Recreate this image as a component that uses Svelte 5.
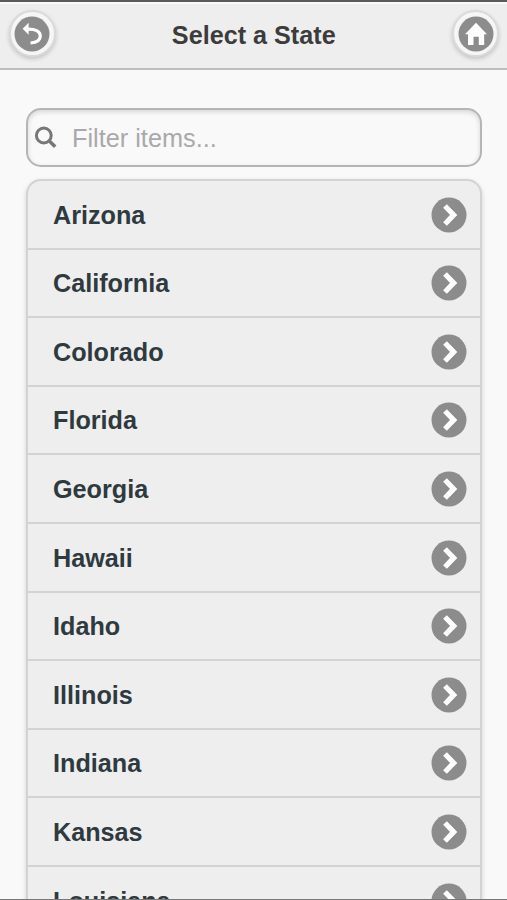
<script>
  const states = ['Arizona', 'California', 'Colorado', 'Florida', 'Georgia', 'Hawaii', 'Idaho', 'Illinois', 'Indiana', 'Kansas', 'Louisiana'];
</script>

<div class="screen">
  <header>
    <button class="round" aria-label="Back">
      <svg width="36" height="36" viewBox="0 0 36 36">
        <circle cx="18" cy="18" r="17.5" fill="#8c8c8c" />
        <path d="M13 13.2C21 12.8 26.3 15 26.3 20C26.3 24.5 22.5 26.6 16.5 27" fill="none" stroke="#fff" stroke-width="3.2" />
        <path d="M8.6 12.8L14.6 6.8V18.8Z" fill="#fff" />
      </svg>
    </button>
    <h1>Select a State</h1>
    <button class="round" aria-label="Home">
      <svg width="36" height="36" viewBox="0 0 36 36">
        <circle cx="18" cy="18" r="17.5" fill="#8c8c8c" />
        <path d="M18 6.7L29 18.2H26.2V29H20.8V20.8H15.5V29H10V18.2H7Z" fill="#fff" />
      </svg>
    </button>
  </header>

  <main>
    <label class="search">
      <svg width="24" height="24" viewBox="0 0 24 24" fill="none" stroke="#777">
        <circle cx="9.8" cy="9.5" r="7.4" stroke-width="3" />
        <path d="M14.8 14.5L21.2 20.7" stroke-width="3.6" />
      </svg>
      <input type="text" placeholder="Filter items..." />
    </label>

    <ul>
      {#each states as state}
        <li>
          <span>{state}</span>
          <svg width="36" height="36" viewBox="0 0 36 36">
            <circle cx="18" cy="18" r="17.5" fill="#8c8c8c" />
            <path d="M14 9L22.7 17.9L14 27" fill="none" stroke="#fff" stroke-width="5.2" />
          </svg>
        </li>
      {/each}
    </ul>
  </main>
</div>

<style>
  .screen {
    box-sizing: border-box;
    height: 900px;
    overflow: hidden;
    display: flex;
    flex-direction: column;
    background: #f9f9f9;
    border-top: 2px solid #5a5a5a;
    border-bottom: 1px solid #777;
    font-family: "Liberation Sans", Arial, sans-serif;
  }
  header {
    box-sizing: border-box;
    height: 68px;
    flex: none;
    display: flex;
    align-items: flex-start;
    justify-content: space-between;
    padding: 8px 8px 0 8.5px;
    background: #eee;
    border-bottom: 2px solid #bdbdbd;
    box-shadow: inset 0 2px 0 #fafafa;
  }
  h1 {
    margin: 0;
    padding-top: 10px;
    font-size: 25.2px;
    line-height: 31px;
    font-weight: 700;
    color: #3c3c3c;
  }
  .round {
    box-sizing: border-box;
    width: 47px;
    height: 47px;
    display: flex;
    align-items: center;
    justify-content: center;
    padding: 0;
    border: 2px solid #dadada;
    border-radius: 50%;
    background: #f6f6f6;
    box-shadow: 0 2px 4px rgba(0, 0, 0, 0.18);
  }
  svg {
    display: block;
    flex: none;
  }
  main {
    padding: 38px 25px 0 26px;
  }
  .search {
    box-sizing: border-box;
    height: 59px;
    display: flex;
    align-items: center;
    padding-left: 6px;
    border: 2px solid #b5b5b5;
    border-radius: 15px;
    box-shadow: inset 0 2px 5px rgba(0, 0, 0, 0.14);
  }
  input {
    min-width: 0;
    flex: 1;
    margin: 0;
    padding: 2px 0 0 14px;
    border: 0;
    outline: 0;
    background: none;
    font: 25.3px/31px "Liberation Sans", Arial, sans-serif;
  }
  input::placeholder {
    color: #a9a9a9;
    opacity: 1;
  }
  ul {
    list-style: none;
    margin: 12px 0 0;
    padding: 0;
    border: 2px solid #d3d3d3;
    border-radius: 15px 15px 0 0;
    background: #eee;
    box-shadow: 0 2px 5px rgba(0, 0, 0, 0.16);
  }
  li {
    box-sizing: border-box;
    height: 68.6px;
    display: flex;
    align-items: center;
    justify-content: space-between;
    padding: 0.6px 13.5px 0 25px;
    border-bottom: 2px solid #d3d3d3;
    font-size: 25.2px;
    line-height: 30px;
    font-weight: 700;
    color: #2f3a3f;
  }
</style>
